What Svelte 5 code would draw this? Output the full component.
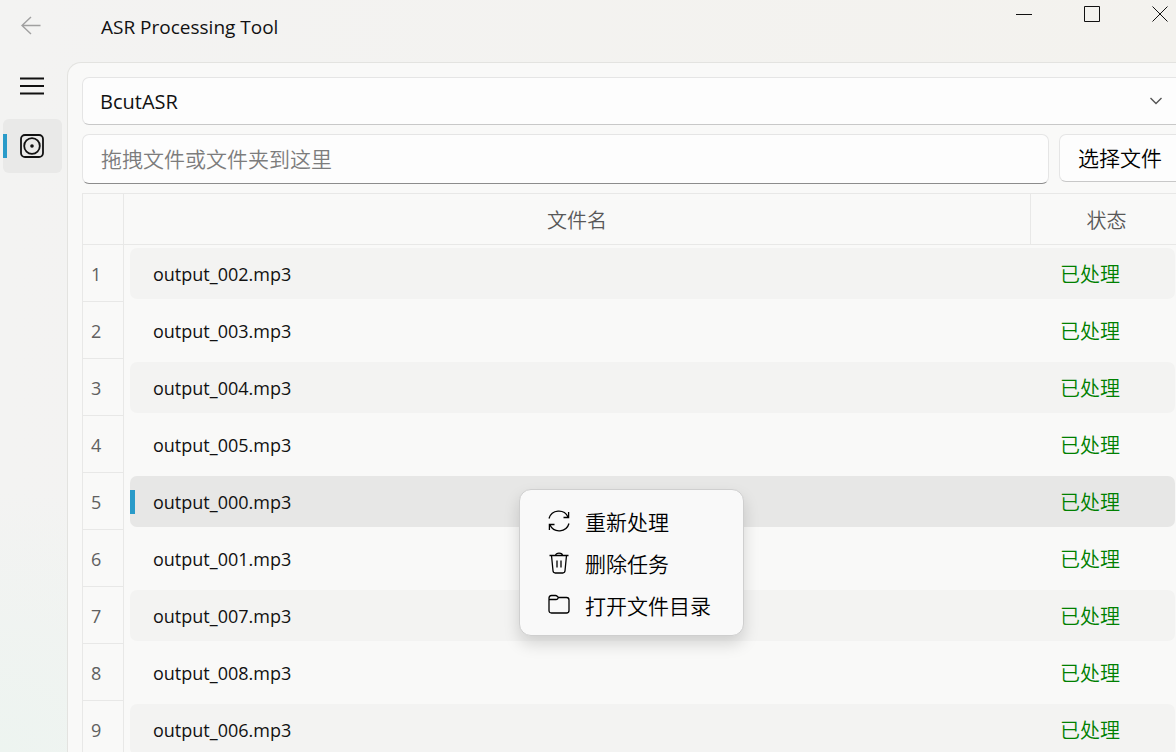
<script lang="ts">
  const engines = ['BcutASR', 'JianYingASR', 'KuaiShouASR'];

  let engine = $state('BcutASR');
  let path = $state('');
  let selected = $state(4);

  const files = [
    'output_002.mp3',
    'output_003.mp3',
    'output_004.mp3',
    'output_005.mp3',
    'output_000.mp3',
    'output_001.mp3',
    'output_007.mp3',
    'output_008.mp3',
    'output_006.mp3'
  ];
</script>

<div class="window">
  <header class="titlebar">
    <button class="back" aria-label="Back" disabled>
      <svg width="20" height="20" viewBox="0 0 20 20">
        <path d="M19.5 9.5H1M10 1L1 9.5L10 18" />
      </svg>
    </button>
    <h1>ASR Processing Tool</h1>
    <div class="window-buttons">
      <button aria-label="Minimize">
        <svg width="16" height="16" viewBox="0 0 16 16"><path d="M0 8.5h16" /></svg>
      </button>
      <button aria-label="Maximize">
        <svg width="16" height="16" viewBox="0 0 16 16"><path d="M.5 .5h15v15H.5z" /></svg>
      </button>
      <button aria-label="Close">
        <svg width="16" height="16" viewBox="0 0 16 16"><path d="M.5 .5l15 15M15.5 .5l-15 15" /></svg>
      </button>
    </div>
  </header>

  <div class="body">
    <nav>
      <button class="nav-item" aria-label="Menu">
        <svg width="24" height="18" viewBox="0 0 24 18"><path d="M0 1.5h24M0 9h24M0 16.5h24" /></svg>
      </button>
      <button class="nav-item active" aria-label="ASR">
        <svg width="26" height="26" viewBox="0 0 26 26">
          <rect x="2" y="2" width="22" height="22" rx="4" />
          <circle cx="13" cy="13" r="7.8" />
          <circle class="dot" cx="13" cy="13" r="1.8" />
        </svg>
      </button>
    </nav>

    <main>
      <div class="combo">
        <select aria-label="ASR" bind:value={engine}>
          {#each engines as name}
            <option value={name}>{name}</option>
          {/each}
        </select>
        <svg width="14" height="14" viewBox="0 0 14 14"><path d="M1.5 4L7 9.5L12.5 4" /></svg>
      </div>

      <div class="file-row">
        <input type="text" aria-label="拖拽文件或文件夹到这里" placeholder="拖拽文件或文件夹到这里" bind:value={path} />
        <button class="choose">选择文件</button>
      </div>

      <table>
        <thead>
          <tr>
            <td class="index"></td>
            <th class="name">文件名</th>
            <th class="status">状态</th>
          </tr>
        </thead>
        <tbody>
          {#each files as file, i}
            <tr class:selected={selected === i} onclick={() => (selected = i)}>
              <th class="index" scope="row">{i + 1}</th>
              <td><div class="cell first">{file}</div></td>
              <td><div class="cell last">已处理</div></td>
            </tr>
          {/each}
        </tbody>
      </table>
    </main>
  </div>

  <!-- Context menu -->
  <div class="menu" role="menu">
    <button role="menuitem">
      <svg width="22" height="22" viewBox="0 0 22 22">
        <path d="M1 8.5A10.2 10.2 0 0 1 20 7M20.6 2v5.500H15.500M21 13.500A10.200 10.200 0 0 1 2 15M1.400 20v-5.500H6.500" />
      </svg>
      重新处理
    </button>
    <button role="menuitem">
      <svg width="22" height="22" viewBox="0 0 22 22">
        <path d="M1.5 3.5h19M7.5 3.5C7.5 .3 14.5 .3 14.5 3.5M3.5 3.5L5 18.8Q5.2 21 7.2 21H14.8Q16.8 21 17 18.8L18.5 3.5M9 8.5v7M13 8.5v7" />
      </svg>
      删除任务
    </button>
    <button role="menuitem">
      <svg width="22" height="22" viewBox="0 0 22 22">
        <path d="M1 5.5V4Q1 1.500 3.500 1.500H7.500Q8.500 1.500 9.200 2.200L10.500 3.500H18.500Q21 3.500 21 6V16.500Q21 19 18.500 19H3.500Q1 19 1 16.500V5.500H8Q9 5.500 9.500 5L10.500 3.500" />
      </svg>
      打开文件目录
    </button>
  </div>
</div>

<style>
  :global(body) {
    margin: 0;
    background: #f3f3f1;
  }

  .window {
    position: relative;
    display: flex;
    flex-direction: column;
    height: 100vh;
    overflow: hidden;
    background:
      radial-gradient(circle at 0 100%, #edf4f0, transparent 260px),
      linear-gradient(90deg, #f3f3f2, #f3f2ee);
    color: #111;
    font-family: 'Open Sans', 'Noto Sans CJK SC', sans-serif;
    font-size: 20px;
  }

  button,
  input,
  select {
    box-sizing: border-box;
    margin: 0;
    color: inherit;
    font: inherit;
  }

  button {
    padding: 0;
    border: none;
    background: none;
  }

  svg {
    display: block;
    flex: none;
    fill: none;
    stroke: currentColor;
  }

  .titlebar {
    display: flex;
    flex: none;
    height: 62px;
  }

  .back {
    width: 62px;
    height: 52px;
    display: grid;
    place-items: center;
    color: #a0a0a0;
  }

  .back svg {
    stroke-width: 1.4;
  }

  h1 {
    flex: 1;
    margin: 0 0 0 39px;
    font-size: 19px;
    line-height: 54px;
    font-weight: 400;
  }

  .window-buttons {
    display: flex;
    align-items: flex-start;
    gap: 52px;
    padding: 6px 8px 0 0;
  }

  .body {
    display: flex;
    flex: 1;
    min-height: 0;
  }

  nav {
    flex: none;
    width: 67px;
  }

  .nav-item {
    display: grid;
    place-items: center;
    width: 59px;
    height: 54px;
    margin: 0 0 9px 3px;
    padding-right: 2px;
    border-radius: 6px;
  }

  .nav-item:first-child {
    height: 48px;
  }

  .nav-item svg {
    stroke-width: 1.8;
  }

  .nav-item .dot {
    fill: currentColor;
    stroke: none;
  }

  .nav-item.active {
    background: linear-gradient(#2a9bc9, #2a9bc9) 0 50% / 4px 24px no-repeat #e9e9e8;
  }

  main {
    flex: 1;
    min-width: 0;
    padding: 14px 0 0 14px;
    border: 1px solid #e3e3e0;
    border-width: 1px 0 0 1px;
    border-radius: 14px 0 0 0;
    background: #f9f9f8;
  }

  .combo {
    position: relative;
  }

  .combo select {
    appearance: none;
    display: block;
    width: 100%;
    height: 48px;
    padding: 0 48px 0 17px;
    border: 1px solid #e5e5e5;
    border-right: none;
    border-bottom-color: #c8c8c8;
    border-radius: 7px 0 0 7px;
    background: #fdfdfd;
    font-size: 20px;
  }

  .combo svg {
    position: absolute;
    top: 17px;
    right: 13px;
    color: #555;
    stroke-width: 1.4;
    pointer-events: none;
  }

  .file-row {
    display: flex;
    align-items: flex-start;
    gap: 10px;
    margin: 9px 0;
    font-size: 21px;
    font-weight: 350;
  }

  .file-row input {
    flex: 1;
    min-width: 0;
    height: 50px;
    padding: 0 18px;
    border: 1px solid #e5e5e5;
    border-bottom-color: #8c8c8c;
    border-radius: 7px;
    background: #fdfdfd;
  }

  .file-row input::placeholder {
    color: #7c7c7c;
    opacity: 1;
  }

  .choose {
    height: 48px;
    padding: 0 14px 2px 18px;
    border: 1px solid #e5e5e5;
    border-right: none;
    border-bottom-color: #c8c8c8;
    border-radius: 7px 0 0 7px;
    background: #fdfdfd;
    color: #000;
  }

  table {
    width: 100%;
    border-collapse: separate;
    border-spacing: 0;
    table-layout: fixed;
  }

  th,
  td {
    box-sizing: border-box;
    padding: 0;
    font-weight: 400;
  }

  thead th,
  thead td {
    height: 52px;
    border: 1px solid #e8e8e7;
    border-width: 1px 1px 1px 0;
    color: #585858;
    font-weight: 350;
  }

  thead .status {
    width: 145px;
    padding-left: 6px;
    border-right: none;
  }

  .index {
    width: 42px;
    border: 1px solid #e8e8e7;
  }

  thead td.index {
    border-width: 1px;
  }

  tbody .index {
    height: 57px;
    padding: 2px 0 0 8px;
    border-top: none;
    color: #606060;
    font-size: 18px;
    text-align: left;
  }

  .cell {
    height: 51px;
    line-height: 53px;
  }

  .cell.first {
    margin-left: 6px;
    padding-left: 23px;
    border-radius: 7px 0 0 7px;
    font-size: 18px;
  }

  .cell.last {
    margin-right: 1px;
    padding-left: 29px;
    border-radius: 0 7px 7px 0;
    color: #008000;
    font-weight: 350;
  }

  tbody tr:nth-child(odd) .cell {
    background: #f3f3f2;
  }

  tbody tr.selected .cell {
    background: #e7e7e6;
  }

  tbody tr.selected .cell.first {
    background: linear-gradient(#2a9bc9, #2a9bc9) 0 50% / 5px 24px no-repeat #e7e7e6;
  }

  .menu {
    position: absolute;
    top: 489px;
    left: 519px;
    box-sizing: border-box;
    width: 225px;
    padding: 10px 0 9px;
    border: 1px solid #cfcfcf;
    border-radius: 12px;
    background: #f9f9f9;
    box-shadow: 0 8px 16px rgba(0, 0, 0, 0.15);
    color: #000;
    font-size: 21px;
    font-weight: 350;
  }

  .menu button {
    display: flex;
    align-items: center;
    gap: 15px;
    width: 100%;
    height: 42px;
    padding-left: 28px;
  }

  .menu svg {
    stroke-width: 1.3;
  }
</style>
